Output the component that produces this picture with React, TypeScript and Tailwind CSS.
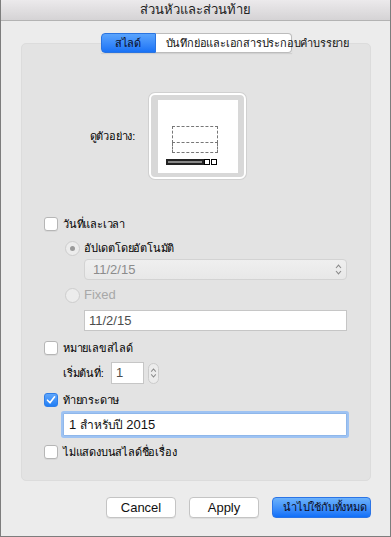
import React from "react";

const font = { fontFamily: '"Liberation Sans", "Noto Sans", "DejaVu Sans", sans-serif' };

function Checkbox({ checked = false }: { checked?: boolean }) {
  if (checked) {
    return (
      <div className="w-[14px] h-[14px] rounded-[3px] bg-gradient-to-b from-[#5fa6fb] to-[#1f7ef5] border border-[#2f7ee8] flex items-center justify-center shrink-0">
        <svg width="10" height="10" viewBox="0 0 10 10">
          <path d="M1.5 5.2 L4 7.8 L8.6 1.8" fill="none" stroke="#fff" strokeWidth="1.6" strokeLinecap="round" strokeLinejoin="round" />
        </svg>
      </div>
    );
  }
  return <div className="w-[14px] h-[14px] rounded-[3px] bg-white border border-[#b6b6b6] shadow-[0_1px_0_rgba(0,0,0,0.05)] shrink-0" />;
}

function Radio({ dot = false }: { dot?: boolean }) {
  return (
    <div className="w-[15px] h-[15px] rounded-full bg-[#ececec] border border-[#cdcdcd] flex items-center justify-center shrink-0">
      {dot && <div className="w-[5px] h-[5px] rounded-full bg-[#9a9a9a]" />}
    </div>
  );
}

function UpDown({ size = 9 }: { size?: number }) {
  return (
    <svg width="7" height={size + 4} viewBox="0 0 7 13">
      <path d="M1 5 L3.5 2.2 L6 5" fill="none" stroke="#8a8a8a" strokeWidth="1.1" />
      <path d="M1 8 L3.5 10.8 L6 8" fill="none" stroke="#8a8a8a" strokeWidth="1.1" />
    </svg>
  );
}

function Preview() {
  return (
    <div className="w-[97px] h-[86px] rounded-[6px] border-2 border-white bg-[#d8d8d8] shadow-[0_0_0_1px_#d0d0d0] p-[7px] pt-[5px]">
      <div className="w-[80px] h-[73px] bg-white flex flex-col pl-[8px] pt-[26px]">
        <div className="ml-[6px] w-[46px] flex flex-col">
          <div className="h-[17px] border border-dashed border-[#777]" />
          <div className="h-[10px] border border-t-0 border-dashed border-[#777]" />
        </div>
        <div className="flex items-center mt-[6px]">
          <div className="w-[38px] h-[6px] border-2 border-[#222] bg-white shadow-[inset_0_0_0_1px_#888]" />
          <div className="w-[6px] h-[6px] border border-black" />
          <div className="w-[6px] h-[6px] border border-black ml-[1px]" />
        </div>
      </div>
    </div>
  );
}

const th = "text-[11px] tracking-[-0.2px] whitespace-nowrap";

export default function App() {
  return (
    <div className="w-[391px] h-[537px] bg-[#ececec] border-x border-b border-[#7d7d7d] flex flex-col text-[13px] text-black" style={font}>
      <div className="h-[21px] shrink-0 bg-gradient-to-b from-[#eceaec] to-[#d5d3d5] border-b border-[#b3b3b3] flex items-center justify-center">
        <span className="text-[13px] text-[#222]">ส่วนหัวและส่วนท้าย</span>
      </div>

      <div className="flex flex-col pl-[20px] pr-[19px]">
        <div className="relative z-10 mt-[12px] flex justify-center">
          <div className="w-[191px] h-[20px] flex whitespace-nowrap shadow-[0_1px_1px_rgba(0,0,0,0.08)]">
            <div className={`w-[55px] shrink-0 h-full rounded-l-[4px] bg-gradient-to-b from-[#5aa4fd] to-[#1972f6] border border-[#2a74e0] flex items-center justify-center text-[#0c0c22] ${th}`}>
              สไลด์
            </div>
            <div className={`flex-1 min-w-0 h-full rounded-r-[4px] bg-white border border-l-0 border-[#bcbcbc] flex items-center pl-[10px] text-[#111] ${th}`}>
              บันทึกย่อและเอกสารประกอบคำบรรยาย
            </div>
          </div>
        </div>

        <div className="-mt-[10px] h-[438px] rounded-[5px] bg-[#e3e3e3] border border-[#dcdcdc] flex flex-col pl-[22px] pr-[23px]">
          <div className="mt-[49px] flex items-center">
            <div className={`w-[92px] text-right pr-[1px] ${th}`}>ดูตัวอย่าง:</div>
            <div className="ml-[13px]">
              <Preview />
            </div>
          </div>

          <div className="mt-[37px] h-[16px] flex items-center gap-[5px]">
            <Checkbox />
            <span className={th}>วันที่และเวลา</span>
          </div>

          <div className="mt-[8px] h-[16px] flex items-center gap-[4px] pl-[21px]">
            <Radio dot />
            <span className={th}>อัปเดตโดยอัตโนมัติ</span>
          </div>

          <div className="mt-[3px] ml-[40px] h-[21px] rounded-[4px] bg-gradient-to-b from-[#efefef] to-[#e8e8e8] border border-[#d3d3d3] flex items-center justify-between pl-[8px] pr-[4px] text-[#8c8c8c]">
            <span>11/2/15</span>
            <UpDown />
          </div>

          <div className="mt-[7px] h-[16px] flex items-center gap-[4px] pl-[21px]">
            <Radio />
            <span className="text-[#a8a8a8]">Fixed</span>
          </div>

          <div className="mt-[7px] ml-[40px] h-[21px] bg-white border border-[#c6c6c6] flex items-center pl-[4px] text-[#4d4d4d]">
            11/2/15
          </div>

          <div className="mt-[9px] h-[16px] flex items-center gap-[5px]">
            <Checkbox />
            <span className={th}>หมายเลขสไลด์</span>
          </div>

          <div className="mt-[6px] h-[22px] flex items-center">
            <span className={`w-[67px] pl-[19px] ${th}`}>เริ่มต้นที่:</span>
            <div className="w-[33px] h-[22px] bg-white border border-[#c6c6c6] flex items-center pl-[4px] text-[#4d4d4d]">1</div>
            <div className="ml-[4px] w-[11px] h-[21px] rounded-full bg-[#ececec] border border-[#cbcbcb] flex items-center justify-center">
              <UpDown size={8} />
            </div>
          </div>

          <div className="mt-[8px] h-[16px] flex items-center gap-[5px]">
            <Checkbox checked />
            <span className={th}>ท้ายกระดาษ</span>
          </div>

          <div className="mt-[5px] ml-[19px] h-[23px] bg-white border border-[#8fb7ea] shadow-[0_0_0_2px_#9ec3f3] rounded-[1px] flex items-center pl-[5px] text-[#111] whitespace-nowrap">
            1 <span className="text-[12px] tracking-[-0.2px] ml-[4px] mr-[3px]">สำหรับปี</span> 2015
          </div>

          <div className="mt-[8px] h-[16px] flex items-center gap-[5px]">
            <Checkbox />
            <span className={th}>ไม่แสดงบนสไลด์ชื่อเรื่อง</span>
          </div>
        </div>

        <div className="mt-[16px] h-[21px] flex justify-end gap-[13px]">
          <button className="w-[70px] h-[21px] rounded-[4px] bg-white border border-[#c4c4c4] shadow-[0_1px_0_rgba(0,0,0,0.06)] text-[13px] text-[#111]">
            Cancel
          </button>
          <button className="w-[70px] h-[21px] rounded-[4px] bg-white border border-[#c4c4c4] shadow-[0_1px_0_rgba(0,0,0,0.06)] text-[13px] text-[#111]">
            Apply
          </button>
          <button className={`w-[99px] h-[21px] rounded-[4px] bg-gradient-to-b from-[#6cb2fb] to-[#0f6ff8] border border-[#2b74e6] text-[#0c0c22] pl-[10px] text-left ${th}`}>
            นำไปใช้กับทั้งหมด
          </button>
        </div>
      </div>
    </div>
  );
}
